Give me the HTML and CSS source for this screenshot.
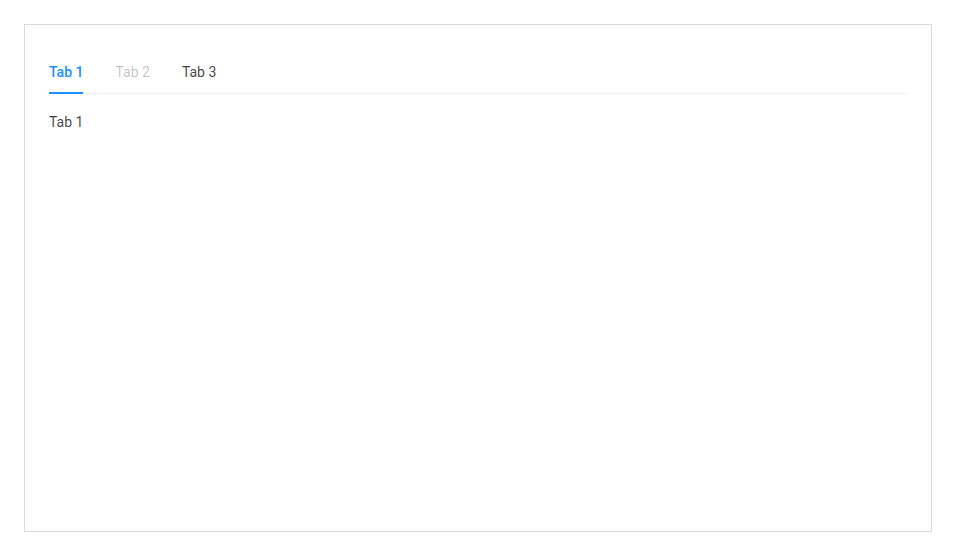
FILE: index.html
```html
<!DOCTYPE html>
<html>
<head>
<meta charset="utf-8">
<link rel="stylesheet" href="styles.css">
</head>
<body>
<div class="frame">
  <div class="tabs">
    <div class="tabs-nav">
      <div class="tab tab-active">Tab 1</div>
      <div class="tab tab-disabled">Tab 2</div>
      <div class="tab">Tab 3</div>
    </div>
    <div class="tabs-content">Tab 1</div>
  </div>
</div>
</body>
</html>
```
FILE: styles.css
```css
html, body {
  margin: 0;
  padding: 0;
  background: #fff;
}
body {
  padding: 24px;
  font-family: Roboto, "Liberation Sans", sans-serif;
  font-size: 14px;
  line-height: 22px;
  color: rgba(0, 0, 0, 0.75);
}
.frame {
  box-sizing: border-box;
  width: 908px;
  height: 508px;
  border: 1px solid #d9d9d9;
  padding: 23px 24px 24px;
}
.tabs-nav {
  display: flex;
  gap: 32px;
  border-bottom: 1px solid #f0f0f0;
  margin-bottom: 16px;
}
.tab {
  padding: 13px 0 10px;
  position: relative;
  color: rgba(0, 0, 0, 0.75);
}
.tab-active {
  color: #1890ff;
  font-weight: 500;
}
.tab-active::after {
  content: "";
  position: absolute;
  left: 0;
  right: 0;
  bottom: -1px;
  height: 2px;
  background: #1890ff;
}
.tab-disabled {
  color: rgba(0, 0, 0, 0.25);
}
.tabs-content {
  padding-top: 1px;
  color: rgba(0, 0, 0, 0.75);
}
```
